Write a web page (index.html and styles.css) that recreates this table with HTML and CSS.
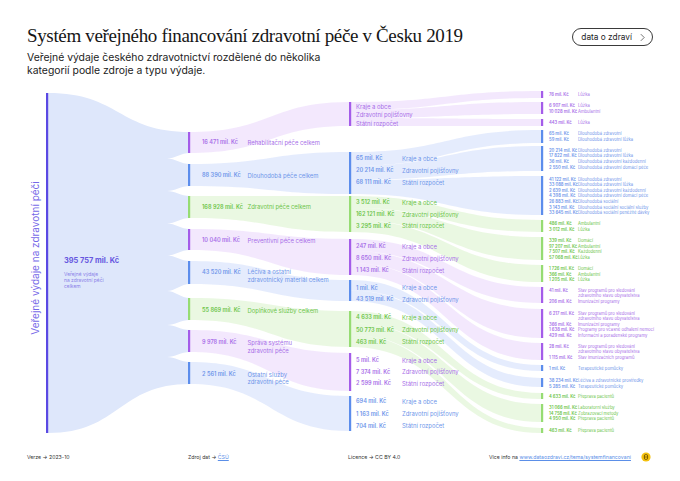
FILE: index.html
```html
<!DOCTYPE html>
<html lang="cs">
<head>
<meta charset="utf-8">
<title>Systém veřejného financování zdravotní péče v Česku 2019</title>
<link rel="stylesheet" href="styles.css">
</head>
<body>
<div class="page">
  <header class="head">
    <div class="titles">
      <h1 class="title">Systém veřejného financování zdravotní péče v Česku 2019</h1>
      <p class="lead">Veřejné výdaje českého zdravotnictví rozdělené do několika<br>kategorií podle zdroje a typu výdaje.</p>
    </div>
    <a class="pill" href="#">data o zdraví
      <svg class="chev" viewBox="0 0 6 10" width="5" height="9"><path d="M1 1L5 5L1 9" /></svg>
    </a>
  </header>

  <svg class="chart" width="680" height="355" viewBox="0 85 680 355">
    <!-- level 0 -> level 1 -->
    <path class="f-main" d="M48 93C120 93 118 132 190 132L190 384C118 384 120 433 48 433Z"/>
    <g class="wedge">
      <path d="M190 153C181 153 175 158.5 167 158.5C175 158.5 181 164 190 164Z"/>
      <path d="M190 186C181 186 175 191 167 191C175 191 181 196 190 196Z"/>
      <path d="M190 218C181 218 175 223.5 167 223.5C175 223.5 181 229 190 229Z"/>
      <path d="M190 250C181 250 175 255.5 167 255.5C175 255.5 181 261 190 261Z"/>
      <path d="M190 284C181 284 175 291 167 291C175 291 181 298 190 298Z"/>
      <path d="M190 320C181 320 175 325 167 325C175 325 181 330 190 330Z"/>
      <path d="M190 352C181 352 175 357 167 357C175 357 181 362 190 362Z"/>
    </g>

    <!-- level 1 -> level 2 -->
    <path class="fp" d="M190 132C270 132 270 102 349 102L349 126C270 126 270 153 190 153Z"/>
    <path class="fb" d="M190 164C270 164 270 152 349 152L349 194C270 194 270 186 190 186Z"/>
    <path class="fg" d="M190 196C270 196 270 196 349 196L349 232C270 232 270 218 190 218Z"/>
    <path class="fp" d="M190 229C270 229 270 239 349 239L349 275C270 275 270 250 190 250Z"/>
    <path class="fb" d="M190 261C270 261 270 280 349 280L349 301C270 301 270 284 190 284Z"/>
    <path class="fg" d="M190 298C270 298 270 311 349 311L349 347C270 347 270 320 190 320Z"/>
    <path class="fp" d="M190 330C270 330 270 353 349 353L349 391C270 391 270 352 190 352Z"/>
    <path class="fb" d="M190 362C270 362 270 396 349 396L349 431C270 431 270 384 190 384Z"/>

    <!-- level 2 -> level 3 -->
    <path class="fp" d="M351 102C446 102 446 91 541 91L541 98C446 98 446 110 351 110Z"/>
    <path class="fp" d="M351 110C446 110 446 102 541 102L541 114C446 114 446 118 351 118Z"/>
    <path class="fp" d="M351 118C446 118 446 119 541 119L541 126C446 126 446 126 351 126Z"/>
    <path class="fb" d="M351 152C446 152 446 130 541 130L541 143C446 143 446 166 351 166Z"/>
    <path class="fb" d="M351 166C446 166 446 146 541 146L541 171C446 171 446 180 351 180Z"/>
    <path class="fb" d="M351 180C446 180 446 176 541 176L541 215C446 215 446 194 351 194Z"/>
    <path class="fg" d="M351 196C446 196 446 220 541 220L541 232C446 232 446 208 351 208Z"/>
    <path class="fg" d="M351 208C446 208 446 237 541 237L541 260C446 260 446 220 351 220Z"/>
    <path class="fg" d="M351 220C446 220 446 265 541 265L541 282C446 282 446 232 351 232Z"/>
    <path class="fp" d="M351 239C446 239 446 287 541 287L541 303C446 303 446 251 351 251Z"/>
    <path class="fp" d="M351 251C446 251 446 309 541 309L541 338C446 338 446 263 351 263Z"/>
    <path class="fp" d="M351 263C446 263 446 343 541 343L541 360C446 360 446 275 351 275Z"/>
    <path class="fb" d="M351 280C446 280 446 365 541 365L541 371C446 371 446 290.5 351 290.5Z"/>
    <path class="fb" d="M351 290.5C446 290.5 446 378 541 378L541 387C446 387 446 301 351 301Z"/>
    <path class="fg" d="M351 311C446 311 446 393 541 393L541 399C446 399 446 323 351 323Z"/>
    <path class="fg" d="M351 323C446 323 446 404 541 404L541 422C446 422 446 335 351 335Z"/>
    <path class="fg" d="M351 335C446 335 446 428 541 428L541 433C446 433 446 347 351 347Z"/>

    <!-- bars -->
    <rect class="b-main" x="46" y="93" width="2.2" height="340"/>
    <g>
      <rect class="bp" x="188" y="132" width="2.2" height="21"/>
      <rect class="bb" x="188" y="164" width="2.2" height="22"/>
      <rect class="bg" x="188" y="196" width="2.2" height="22"/>
      <rect class="bp" x="188" y="229" width="2.2" height="21"/>
      <rect class="bb" x="188" y="261" width="2.2" height="23"/>
      <rect class="bg" x="188" y="298" width="2.2" height="22"/>
      <rect class="bp" x="188" y="330" width="2.2" height="22"/>
      <rect class="bb" x="188" y="362" width="2.2" height="22"/>
    </g>
    <g>
      <rect class="bp" x="349" y="102" width="2.2" height="24"/>
      <rect class="bb" x="349" y="152" width="2.2" height="42"/>
      <rect class="bg" x="349" y="196" width="2.2" height="36"/>
      <rect class="bp" x="349" y="239" width="2.2" height="36"/>
      <rect class="bb" x="349" y="280" width="2.2" height="21"/>
      <rect class="bg" x="349" y="311" width="2.2" height="36"/>
      <rect class="bp" x="349" y="353" width="2.2" height="38"/>
      <rect class="bb" x="349" y="396" width="2.2" height="35"/>
    </g>
    <g>
      <rect class="bp" x="541" y="91" width="2.2" height="7"/>
      <rect class="bp" x="541" y="102" width="2.2" height="12"/>
      <rect class="bp" x="541" y="119" width="2.2" height="7"/>
      <rect class="bb" x="541" y="130" width="2.2" height="13"/>
      <rect class="bb" x="541" y="146" width="2.2" height="25"/>
      <rect class="bb" x="541" y="176" width="2.2" height="39"/>
      <rect class="bg" x="541" y="220" width="2.2" height="12"/>
      <rect class="bg" x="541" y="237" width="2.2" height="23"/>
      <rect class="bg" x="541" y="265" width="2.2" height="17"/>
      <rect class="bp" x="541" y="287" width="2.2" height="16"/>
      <rect class="bp" x="541" y="309" width="2.2" height="29"/>
      <rect class="bp" x="541" y="343" width="2.2" height="17"/>
      <rect class="bb" x="541" y="365" width="2.2" height="6"/>
      <rect class="bb" x="541" y="378" width="2.2" height="9"/>
      <rect class="bg" x="541" y="393" width="2.2" height="6"/>
      <rect class="bg" x="541" y="404" width="2.2" height="18"/>
      <rect class="bg" x="541" y="428" width="2.2" height="5"/>
    </g>

    <!-- level 0 labels -->
    <text class="axis" transform="translate(35 258) rotate(-90)">Veřejné výdaje na zdravotní péči</text>
    <text class="total" x="64" y="260">395 757 mil. Kč</text>
    <text class="total-sub" x="64" y="273.7">Veřejné výdaje</text>
    <text class="total-sub" x="64" y="279.7">na zdravotní péči</text>
    <text class="total-sub" x="64" y="285.7">celkem</text>

    <!-- level 1 labels -->
    <g class="tp">
      <text class="v2" x="202" y="142">16 471 mil. Kč</text>
      <text class="l2" x="247.5" y="142">Rehabilitační péče celkem</text>
    </g>
    <g class="tb">
      <text class="v2" x="202" y="175">88 390 mil. Kč</text>
      <text class="l2" x="247.5" y="175">Dlouhodobá péče celkem</text>
    </g>
    <g class="tg">
      <text class="v2" x="202" y="206.5">168 928 mil. Kč</text>
      <text class="l2" x="247.5" y="206.5">Zdravotní péče celkem</text>
    </g>
    <g class="tp">
      <text class="v2" x="202" y="240">10 040 mil. Kč</text>
      <text class="l2" x="247.5" y="240">Preventivní péče celkem</text>
    </g>
    <g class="tb">
      <text class="v2" x="202" y="271.5">43 520 mil. Kč</text>
      <text class="l2" x="247.5" y="271.5">Léčiva a ostatní</text>
      <text class="l2" x="247.5" y="279.3">zdravotnický materiál celkem</text>
    </g>
    <g class="tg">
      <text class="v2" x="202" y="310">55 869 mil. Kč</text>
      <text class="l2" x="247.5" y="310">Doplňkové služby celkem</text>
    </g>
    <g class="tp">
      <text class="v2" x="202" y="342">9 978 mil. Kč</text>
      <text class="l2" x="247.5" y="342">Správa systému</text>
      <text class="l2" x="247.5" y="350">zdravotní péče</text>
    </g>
    <g class="tb">
      <text class="v2" x="202" y="374">2 561 mil. Kč</text>
      <text class="l2" x="247.5" y="374">Ostatní služby</text>
      <text class="l2" x="247.5" y="381.7">zdravotní péče</text>
    </g>

    <!-- level 2 labels -->
    <g class="tp">
      <text class="l3" x="356" y="106.6">Kraje a obce</text>
      <text class="l3" x="356" y="114.8">Zdravotní pojišťovny</text>
      <text class="l3" x="356" y="123">Státní rozpočet</text>
    </g>
    <g class="tb">
      <text class="v3" x="356" y="158.3">65 mil. Kč</text><text class="l3" x="402" y="158.3">Kraje a obce</text>
      <text class="v3" x="356" y="170.3">20 214 mil. Kč</text><text class="l3" x="402" y="170.3">Zdravotní pojišťovny</text>
      <text class="v3" x="356" y="182.3">68 111 mil. Kč</text><text class="l3" x="402" y="182.3">Státní rozpočet</text>
    </g>
    <g class="tg">
      <text class="v3" x="356" y="202.3">3 512 mil. Kč</text><text class="l3" x="402" y="202.3">Kraje a obce</text>
      <text class="v3" x="356" y="214">162 121 mil. Kč</text><text class="l3" x="402" y="214">Zdravotní pojišťovny</text>
      <text class="v3" x="356" y="225.7">3 295 mil. Kč</text><text class="l3" x="402" y="225.7">Státní rozpočet</text>
    </g>
    <g class="tp">
      <text class="v3" x="356" y="246">247 mil. Kč</text><text class="l3" x="402" y="246">Kraje a obce</text>
      <text class="v3" x="356" y="258.3">8 650 mil. Kč</text><text class="l3" x="402" y="258.3">Zdravotní pojišťovny</text>
      <text class="v3" x="356" y="270.3">1 143 mil. Kč</text><text class="l3" x="402" y="270.3">Státní rozpočet</text>
    </g>
    <g class="tb">
      <text class="v3" x="356" y="287.7">1 mil. Kč</text><text class="l3" x="402" y="287.7">Kraje a obce</text>
      <text class="v3" x="356" y="299.3">43 519 mil. Kč</text><text class="l3" x="402" y="299.3">Zdravotní pojišťovny</text>
    </g>
    <g class="tg">
      <text class="v3" x="356" y="317.3">4 633 mil. Kč</text><text class="l3" x="402" y="317.3">Kraje a obce</text>
      <text class="v3" x="356" y="329.7">50 773 mil. Kč</text><text class="l3" x="402" y="329.7">Zdravotní pojišťovny</text>
      <text class="v3" x="356" y="341.7">463 mil. Kč</text><text class="l3" x="402" y="341.7">Státní rozpočet</text>
    </g>
    <g class="tp">
      <text class="v3" x="356" y="360">5 mil. Kč</text><text class="l3" x="402" y="360">Kraje a obce</text>
      <text class="v3" x="356" y="371.7">7 374 mil. Kč</text><text class="l3" x="402" y="371.7">Zdravotní pojišťovny</text>
      <text class="v3" x="356" y="383.3">2 599 mil. Kč</text><text class="l3" x="402" y="383.3">Státní rozpočet</text>
    </g>
    <g class="tb">
      <text class="v3" x="356" y="401">694 mil. Kč</text><text class="l3" x="402" y="401">Kraje a obce</text>
      <text class="v3" x="356" y="413.7">1 163 mil. Kč</text><text class="l3" x="402" y="413.7">Zdravotní pojišťovny</text>
      <text class="v3" x="356" y="425.7">704 mil. Kč</text><text class="l3" x="402" y="425.7">Státní rozpočet</text>
    </g>

    <!-- level 3 labels -->
    <g class="tp">
      <text class="v4" x="549" y="94.5">76 mil. Kč</text><text class="l4" x="578" y="94.5">Lůžka</text>
      <text class="v4" x="549" y="105.5">6 907 mil. Kč</text><text class="l4" x="578" y="105.5">Lůžka</text>
      <text class="v4" x="549" y="111">10 028 mil. Kč</text><text class="l4" x="578" y="111">Ambulantní</text>
      <text class="v4" x="549" y="122.5">443 mil. Kč</text><text class="l4" x="578" y="122.5">Lůžka</text>
    </g>
    <g class="tb">
      <text class="v4" x="549" y="133.5">65 mil. Kč</text><text class="l4" x="578" y="133.5">Dlouhodobá zdravotní</text>
      <text class="v4" x="549" y="139.5">59 mil. Kč</text><text class="l4" x="578" y="139.5">Dlouhodobá zdravotní lůžka</text>
      <text class="v4" x="549" y="150">20 214 mil. Kč</text><text class="l4" x="578" y="150">Dlouhodobá zdravotní</text>
      <text class="v4" x="549" y="155.7">17 822 mil. Kč</text><text class="l4" x="578" y="155.7">Dlouhodobá zdravotní lůžka</text>
      <text class="v4" x="549" y="161.5">36 mil. Kč</text><text class="l4" x="578" y="161.5">Dlouhodobá zdravotní každodenní</text>
      <text class="v4" x="549" y="167.3">2 550 mil. Kč</text><text class="l4" x="578" y="167.3">Dlouhodobá zdravotní domácí péče</text>
      <text class="v4" x="549" y="179">41 122 mil. Kč</text><text class="l4" x="578" y="179">Dlouhodobá zdravotní</text>
      <text class="v4" x="549" y="184.6">33 088 mil. Kč</text><text class="l4" x="578" y="184.6">Dlouhodobá zdravotní lůžka</text>
      <text class="v4" x="549" y="190.2">2 639 mil. Kč</text><text class="l4" x="578" y="190.2">Dlouhodobá zdravotní každodenní</text>
      <text class="v4" x="549" y="195.8">4 398 mil. Kč</text><text class="l4" x="578" y="195.8">Dlouhodobá zdravotní domácí péče</text>
      <text class="v4" x="549" y="201.4">26 883 mil. Kč</text><text class="l4" x="578" y="201.4">Dlouhodobá sociální</text>
      <text class="v4" x="549" y="207">3 143 mil. Kč</text><text class="l4" x="578" y="207">Dlouhodobá sociální sociální služby</text>
      <text class="v4" x="549" y="212.4">33 645 mil. Kč</text><text class="l4" x="578" y="212.4">Dlouhodobá sociální peněžité dávky</text>
    </g>
    <g class="tg">
      <text class="v4" x="549" y="223.5">486 mil. Kč</text><text class="l4" x="578" y="223.5">Ambulantní</text>
      <text class="v4" x="549" y="229">3 012 mil. Kč</text><text class="l4" x="578" y="229">Lůžka</text>
      <text class="v4" x="549" y="240.5">339 mil. Kč</text><text class="l4" x="578" y="240.5">Domácí</text>
      <text class="v4" x="549" y="246">97 207 mil. Kč</text><text class="l4" x="578" y="246">Ambulantní</text>
      <text class="v4" x="549" y="251.5">7 507 mil. Kč</text><text class="l4" x="578" y="251.5">Každodenní</text>
      <text class="v4" x="549" y="257">57 068 mil. Kč</text><text class="l4" x="578" y="257">Lůžka</text>
      <text class="v4" x="549" y="268.5">1 726 mil. Kč</text><text class="l4" x="578" y="268.5">Domácí</text>
      <text class="v4" x="549" y="274">366 mil. Kč</text><text class="l4" x="578" y="274">Ambulantní</text>
      <text class="v4" x="549" y="279.5">1 205 mil. Kč</text><text class="l4" x="578" y="279.5">Lůžka</text>
    </g>
    <g class="tp">
      <text class="v4" x="549" y="290">41 mil. Kč</text><text class="l4" x="578" y="290">Stav programů pro sledování</text>
      <text class="l4" x="578" y="295.5">zdravotního stavu obyvatelstva</text>
      <text class="v4" x="549" y="301">206 mil. Kč</text><text class="l4" x="578" y="301">Imunizační programy</text>
      <text class="v4" x="549" y="313.3">6 217 mil. Kč</text><text class="l4" x="578" y="313.3">Stav programů pro sledování</text>
      <text class="l4" x="578" y="318.8">zdravotního stavu obyvatelstva</text>
      <text class="v4" x="549" y="324.3">366 mil. Kč</text><text class="l4" x="578" y="324.3">Imunizační programy</text>
      <text class="v4" x="549" y="329.8">1 638 mil. Kč</text><text class="l4" x="578" y="329.8">Programy pro včasné odhalení nemocí</text>
      <text class="v4" x="549" y="335.3">429 mil. Kč</text><text class="l4" x="578" y="335.3">Informační a poradenské programy</text>
      <text class="v4" x="549" y="346">28 mil. Kč</text><text class="l4" x="578" y="346">Stav programů pro sledování</text>
      <text class="l4" x="578" y="351.5">zdravotního stavu obyvatelstva</text>
      <text class="v4" x="549" y="357">1 115 mil. Kč</text><text class="l4" x="578" y="357">Stav imunizačních programů</text>
    </g>
    <g class="tb">
      <text class="v4" x="549" y="368">1 mil. Kč</text><text class="l4" x="578" y="368">Terapeutické pomůcky</text>
      <text class="v4" x="549" y="380.5">38 234 mil. Kč</text><text class="l4" x="578" y="380.5">Léčiva a zdravotnické prostředky</text>
      <text class="v4" x="549" y="386">5 285 mil. Kč</text><text class="l4" x="578" y="386">Terapeutické pomůcky</text>
    </g>
    <g class="tg">
      <text class="v4" x="549" y="396">4 633 mil. Kč</text><text class="l4" x="578" y="396">Přeprava pacientů</text>
      <text class="v4" x="549" y="407.5">31 066 mil. Kč</text><text class="l4" x="578" y="407.5">Laboratorní služby</text>
      <text class="v4" x="549" y="413">14 758 mil. Kč</text><text class="l4" x="578" y="413">Zobrazovací metody</text>
      <text class="v4" x="549" y="418.5">4 950 mil. Kč</text><text class="l4" x="578" y="418.5">Přeprava pacientů</text>
      <text class="v4" x="549" y="430.5">463 mil. Kč</text><text class="l4" x="578" y="430.5">Přeprava pacientů</text>
    </g>
  </svg>

  <footer class="foot">
    <span class="fi">Verze → 2023-10</span>
    <span class="fi">Zdroj dat → <a class="lnk" href="#">ČSÚ</a></span>
    <span class="fi">Licence → CC BY 4.0</span>
    <span class="fi">Více info na <a class="lnk" href="#">www.dataozdravi.cz/tema/systemfinancovani</a></span>
    <svg class="badge" viewBox="0 0 10 10" width="10" height="10">
      <circle class="badge-bg" cx="5" cy="5" r="4.6"/>
      <rect class="badge-fg" x="3.4" y="2.6" width="3.2" height="4.8" rx="1.2"/>
      <line class="badge-ln" x1="3.4" y1="5" x2="6.6" y2="5"/>
    </svg>
  </footer>
</div>
</body>
</html>
```

FILE: styles.css
```css
* { box-sizing: border-box; }
html, body { margin: 0; padding: 0; background: #fff; }
body { font-family: Inter, "Noto Sans", sans-serif; color: #1d1d1f; }

.page { width: 680px; height: 481px; overflow: hidden; }

.head {
  height: 85px;
  padding: 24px 27px 0 27px;
  display: flex;
  justify-content: space-between;
  align-items: flex-start;
}
.title {
  margin: 0;
  font-family: "Liberation Serif", "DejaVu Serif", serif;
  font-weight: 400;
  font-size: 19px;
  letter-spacing: -0.35px;
  line-height: 24px;
  color: #161616;
}
.lead {
  margin: 3px 0 0 0;
  font-size: 10.4px;
  line-height: 13px;
  color: #222;
}
.pill {
  margin-top: 4px;
  height: 18px;
  padding: 0 7px 0 8px;
  border: 1px solid #3a3a3a;
  border-radius: 9px;
  display: flex;
  align-items: center;
  gap: 8px;
  font-size: 8.3px;
  color: #1d1d1f;
  text-decoration: none;
}
.chev { display: block; }
.chev path { fill: none; stroke: #444; stroke-width: 0.9; }

.chart { display: block; }

.f-main { fill: #dee7fb; }
.wedge path { fill: #fff; }
.fp { fill: #ead6fc; fill-opacity: 0.55; }
.fb { fill: #d3e0fb; fill-opacity: 0.6; }
.fg { fill: #dcf3cf; fill-opacity: 0.6; }

.b-main { fill: #5a49e3; }
.bp { fill: #a45ce9; }
.bb { fill: #5c8dec; }
.bg { fill: #96dc73; }

.chart text { dominant-baseline: central; font-family: Inter, "Noto Sans", sans-serif; }
.axis { font-size: 10px; fill: #7668e8; text-anchor: middle; }
.total { font-size: 7.4px; font-weight: 700; fill: #6657e0; }
.total-sub { font-size: 4.9px; fill: #8a7fe8; }

.tp text { fill: #a86fe8; }
.tb text { fill: #6f96ea; }
.tg text { fill: #6cc54a; }

.v2 { font-size: 5.6px; font-weight: 600; }
.l2 { font-size: 5.9px; }
.v3 { font-size: 5.6px; font-weight: 600; }
.l3 { font-size: 5.9px; }
.v4 { font-size: 4.2px; font-weight: 600; }
.l4 { font-size: 4.2px; }

.foot {
  height: 41px;
  padding: 12px 0 0 27px;
  display: grid;
  grid-template-columns: 161px 160px 141px 152px 10px;
  align-content: start;
  align-items: center;
  font-size: 5.2px;
  line-height: 8px;
  color: #333;
}
.fi { white-space: nowrap; }
.lnk { color: #5b8fe8; text-decoration: underline; }
.badge { display: block; }
.badge-bg { fill: #f4c10f; }
.badge-fg { fill: none; stroke: #5a4300; stroke-width: 0.8; }
.badge-ln { stroke: #5a4300; stroke-width: 0.6; }
```
